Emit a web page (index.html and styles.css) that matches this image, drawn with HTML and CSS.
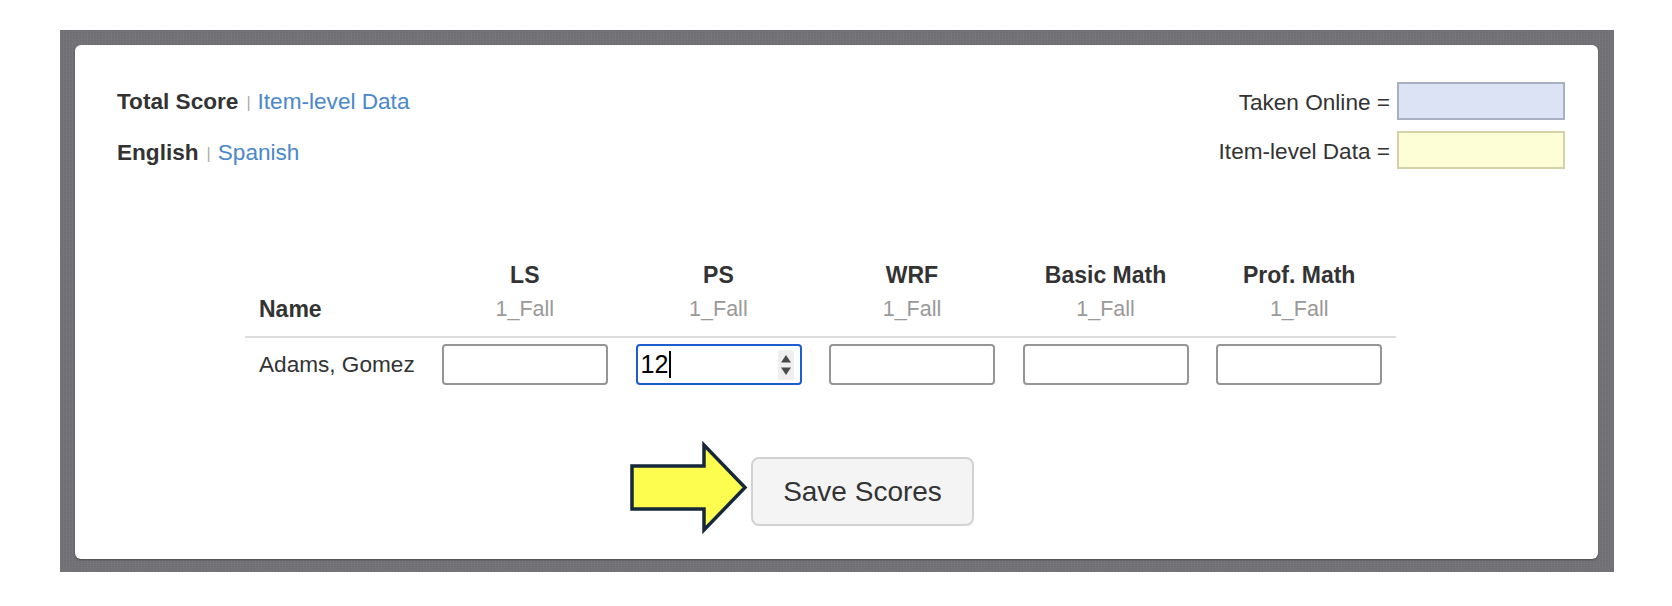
FILE: index.html
```html
<!DOCTYPE html>
<html lang="en">
<head>
<meta charset="utf-8">
<title>Score Entry</title>
<link rel="stylesheet" href="styles.css">
</head>
<body>
<div class="frame">
  <div class="panel">
    <div class="top">
      <div class="switches">
        <div class="switch"><span class="active">Total Score</span><span class="sep">|</span><a href="#" class="link">Item-level Data</a></div>
        <div class="switch"><span class="active">English</span><span class="sep">|</span><a href="#" class="link">Spanish</a></div>
      </div>
      <div class="legend">
        <div class="legend-row"><span class="legend-label">Taken Online =</span><span class="swatch swatch-online"></span></div>
        <div class="legend-row"><span class="legend-label">Item-level Data =</span><span class="swatch swatch-item"></span></div>
      </div>
    </div>

    <table class="scores">
      <colgroup>
        <col class="col-name">
        <col class="col-score"><col class="col-score"><col class="col-score"><col class="col-score"><col class="col-score">
      </colgroup>
      <thead>
        <tr>
          <th class="th-name">Name</th>
          <th>LS<br><span class="term">1_Fall</span></th>
          <th>PS<br><span class="term">1_Fall</span></th>
          <th>WRF<br><span class="term">1_Fall</span></th>
          <th>Basic Math<br><span class="term">1_Fall</span></th>
          <th>Prof. Math<br><span class="term">1_Fall</span></th>
        </tr>
      </thead>
      <tbody>
        <tr>
          <td class="td-name">Adams, Gomez</td>
          <td><input class="score-input" type="text" aria-label="LS"></td>
          <td>
            <div class="score-input focused" role="spinbutton" aria-label="PS" aria-valuenow="12">
              <span class="val">12</span><span class="caret"></span>
              <span class="spinner">
                <svg width="16" height="30" viewBox="0 0 16 30">
                  <rect x="0" y="0" width="16" height="30" rx="2" fill="#efefef"/>
                  <path d="M3 12.5 L8 5 L13 12.5 Z" fill="#4a4a4a"/>
                  <path d="M3 17.5 L8 25 L13 17.5 Z" fill="#4a4a4a"/>
                </svg>
              </span>
            </div>
          </td>
          <td><input class="score-input" type="text" aria-label="WRF"></td>
          <td><input class="score-input" type="text" aria-label="Basic Math"></td>
          <td><input class="score-input" type="text" aria-label="Prof. Math"></td>
        </tr>
      </tbody>
    </table>

    <div class="actions">
      <button class="save-btn" type="button">Save Scores</button>
    </div>

    <svg class="pointer-arrow" width="125" height="98" viewBox="0 0 125 98">
      <polygon points="6,27 78,27 78,6 119,48.5 78,91 78,70 6,70" fill="#fdfd50" stroke="#15273a" stroke-width="3.5" stroke-linejoin="miter"/>
    </svg>
  </div>
</div>
</body>
</html>
```

FILE: styles.css
```css
html, body {
  margin: 0;
  padding: 0;
  background: #ffffff;
}

body {
  font-family: "Liberation Sans", Arial, Helvetica, sans-serif;
  color: #333333;
}

.frame {
  margin: 30px 0 0 60px;
  width: 1554px;
  height: 542px;
  box-sizing: border-box;
  padding: 15px 16px 13px 15px;
  background-color: #727277;
  background-image:
    repeating-linear-gradient(90deg, rgba(255,255,255,0.02) 0 1px, rgba(0,0,0,0.02) 1px 3px),
    repeating-linear-gradient(0deg, rgba(255,255,255,0.015) 0 1px, rgba(0,0,0,0.015) 1px 2px);
}

.panel {
  position: relative;
  height: 100%;
  box-sizing: border-box;
  background: #ffffff;
  border-radius: 6px;
  box-shadow: 0 1px 2px rgba(0,0,0,0.35);
  padding: 0 33px 0 42px;
}

/* top area */
.top {
  display: flex;
  justify-content: space-between;
  align-items: flex-start;
}

.switches {
  padding-top: 32px;
}

.switch {
  height: 50px;
  line-height: 50px;
  font-size: 22.6px;
  white-space: nowrap;
}

.switch + .switch {
  line-height: 52px;
}

.active {
  font-weight: bold;
  color: #333333;
}

.sep {
  display: inline-block;
  font-size: 16px;
  color: #aaaaaa;
  margin: 0 7px 0 8px;
  vertical-align: 1px;
}

.link {
  color: #4a88c9;
  text-decoration: none;
}

.legend {
  padding-top: 37px;
  display: flex;
  flex-direction: column;
  gap: 11px;
}

.legend-row {
  display: flex;
  align-items: flex-start;
  justify-content: flex-end;
  height: 38px;
  font-size: 22.6px;
  color: #333333;
}

.legend-label {
  line-height: 38px;
  padding-top: 2px;
}

.swatch {
  display: block;
  width: 168px;
  height: 38px;
  box-sizing: border-box;
  margin-left: 7px;
  border: 2px solid;
}

.swatch-online {
  background: #dce3f4;
  border-color: #a8b0c4;
}

.swatch-item {
  background: #fefed6;
  border-color: #d3d2a6;
}

/* table */
.scores {
  margin: 74px 0 0 128px;
  width: 1151px;
  border-collapse: collapse;
  table-layout: fixed;
  font-size: 22.6px;
}

.col-name { width: 183px; }
.col-score { width: 193.6px; }

.scores th {
  padding: 8px 13px 10px;
  line-height: 33px;
  font-size: 23px;
  font-weight: bold;
  text-align: center;
  vertical-align: bottom;
  color: #333333;
  border-bottom: 2px solid #dddddd;
}

.scores th.th-name {
  text-align: left;
  padding-left: 14px;
}

.term {
  font-weight: normal;
  font-size: 21.5px;
  color: #999999;
}

.scores td {
  padding: 6px 13px 6px 14px;
  vertical-align: middle;
}

.td-name {
  color: #333333;
  white-space: nowrap;
}

.score-input {
  display: block;
  width: 166px;
  height: 41px;
  box-sizing: border-box;
  margin: 0;
  border: 2px solid #959595;
  border-radius: 4px;
  background: #ffffff;
  font-family: "Liberation Sans", Arial, sans-serif;
  font-size: 25px;
  color: #000000;
  outline: none;
}

.score-input.focused {
  position: relative;
  border-color: #1c5dd2;
  display: flex;
  align-items: center;
  padding-left: 3px;
}

.val {
  line-height: 1;
}

.caret {
  display: inline-block;
  width: 1.5px;
  height: 27px;
  background: #000000;
  margin-left: 1px;
}

.spinner {
  position: absolute;
  right: 6px;
  top: 50%;
  transform: translateY(-50%);
  display: flex;
}

/* actions */
.actions {
  margin-top: 66px;
  padding-left: 634px;
}

.save-btn {
  width: 223px;
  height: 69px;
  box-sizing: border-box;
  border: 2px solid #d2d2d2;
  border-radius: 8px;
  background: #f4f4f4;
  font-family: "Liberation Sans", Arial, sans-serif;
  font-size: 28px;
  color: #333333;
  cursor: pointer;
}

.pointer-arrow {
  position: absolute;
  left: 551px;
  top: 394px;
}
```
